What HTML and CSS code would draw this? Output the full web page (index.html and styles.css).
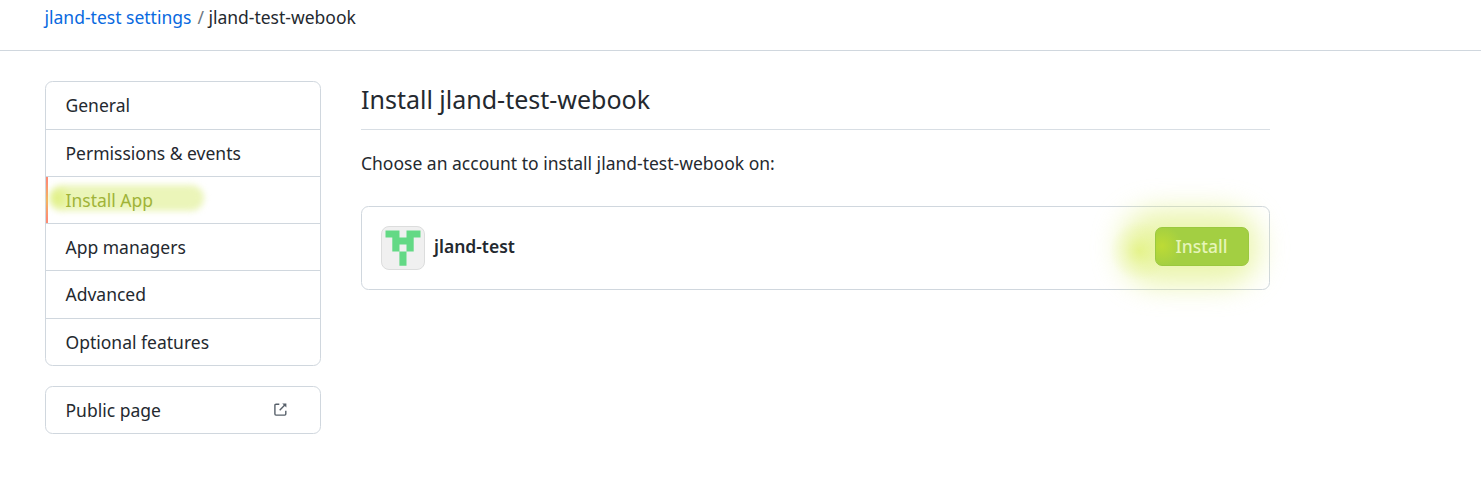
FILE: index.html
```html
<!DOCTYPE html>
<html lang="en">
<head>
<meta charset="utf-8">
<title>Install jland-test-webook</title>
<link rel="stylesheet" href="styles.css">
</head>
<body>
<header class="crumbs"><a class="crumb-link" href="#">jland-test settings</a><span class="slash">/</span><span class="current">jland-test-webook</span></header>
<div class="layout">
  <aside class="sidebar">
    <nav class="menu">
      <a class="item first general">General</a>
      <a class="item">Permissions &amp; events</a>
      <a class="item selected"><span class="marker"></span><span class="label">Install App</span></a>
      <a class="item">App managers</a>
      <a class="item tall">Advanced</a>
      <a class="item">Optional features</a>
    </nav>
    <nav class="menu">
      <a class="item first public">Public page
        <svg class="external" viewBox="0 0 13 13" fill="none" stroke="#57606a" stroke-width="1.4"><path d="M5.3 1.2H2Q.9 1.2.9 2.3V11Q.9 12.1 2 12.1H10.7Q11.8 12.1 11.8 11V7.8"/><path d="M5.7 7.2 10.8 2.1"/><path d="M8.2.4h4.2v4.2z" fill="#57606a" stroke="none"/></svg>
      </a>
    </nav>
  </aside>
  <main class="content">
    <h2 class="title">Install jland-test-webook</h2>
    <p class="intro">Choose an account to install jland-test-webook on:</p>
    <section class="account">
      <svg class="avatar" viewBox="0 0 44 44"><rect x=".5" y=".5" width="43" height="43" rx="7.5" fill="#f0f0f0" stroke="#dcdddd"/><path d="M4.5 4.5H18.5V11.5H25.5V4.5H39.5V11.5H32.7V25.5H25.5V39.8H18.4V25.5H11.3V11.5H4.5zM18.5 18.5V25.5H25.5V18.5z" fill="#63d985" fill-rule="evenodd"/></svg>
      <strong class="name">jland-test</strong>
      <div class="action"><span class="glow"></span><span class="spot"></span><button class="install">Install</button></div>
    </section>
  </main>
</div>
</body>
</html>
```
FILE: styles.css
```css
* { box-sizing: border-box; }
body {
  margin: 0;
  height: 477px;
  overflow: hidden;
  background: #fff;
  color: #24292f;
  font: 17.5px/26px "Noto Sans", sans-serif;
}
.crumbs {
  display: flex;
  height: 51px;
  padding: 4px 0 0 44.5px;
  border-bottom: 1px solid #d0d7de;
}
.crumb-link { color: #0969e0; text-decoration: none; }
.slash { margin: 0 4.3px 0 6.2px; color: #6e7781; }
.layout {
  display: grid;
  grid-template-columns: 276px 909px;
  gap: 40px;
  padding: 30px 0 0 45px;
}
.sidebar { display: flex; flex-direction: column; gap: 20px; }
.menu { border: 1px solid #d0d7de; border-radius: 7.5px; }
.item {
  position: relative;
  display: flex;
  align-items: center;
  height: 47px;
  padding: 0 20px 0 19.5px;
  border-top: 1px solid #d0d7de;
}
.item.first { border-top: 0; }
.item.general { padding-bottom: 1px; }
.item.tall { height: 48px; padding-bottom: 1px; }
.item.public { height: 46px; justify-content: space-between; padding-right: 33px; }
.menu .item:last-child:not(.public) { padding-bottom: 1px; }
.external { width: 13px; height: 13px; margin-top: -2px; }
.marker {
  position: absolute;
  left: 0;
  top: 0;
  width: 2px;
  height: 46px;
  background: linear-gradient(#fd8c73 10%, #f3b460 50%, #fd8c73 90%);
}
.label { position: relative; color: #a0b338; }
.selected::before {
  content: "";
  position: absolute;
  left: 3px;
  top: 8px;
  width: 155px;
  height: 26px;
  border-radius: 13px;
  background: radial-gradient(circle at 9px 13px, #dff07c 0, #ebf5b9 14px);
  filter: blur(3px);
}
.title {
  height: 49px;
  margin: 0;
  border-bottom: 1px solid #d8dee4;
  font-size: 25px;
  font-weight: 400;
  line-height: 36px;
}
.intro { margin: 20px 0 30px; }
.account {
  display: flex;
  align-items: center;
  height: 84px;
  padding: 0 20px 0 19px;
  border: 1px solid #d0d7de;
  border-radius: 7.5px;
}
.avatar { width: 44px; height: 44px; }
.name { margin: -4px 0 0 9px; font-weight: 600; }
.action { position: relative; margin: -3px 0 0 auto; }
.glow {
  position: absolute;
  inset: -17px -10px -19px -34px;
  border-radius: 35px;
  background: rgba(221, 237, 115, .58);
  filter: blur(14px);
}
.spot {
  position: absolute;
  left: -46px;
  top: -6px;
  width: 60px;
  height: 60px;
  background: radial-gradient(circle, rgba(216, 238, 75, .4), rgba(218, 239, 88, .16) 35%, rgba(220, 240, 100, 0) 70%);
}
.install {
  position: relative;
  display: block;
  width: 94px;
  height: 39px;
  padding: 0 1px 0 0;
  border: 1px solid #9bc83f;
  border-radius: 7px;
  background: radial-gradient(circle at 6px 18px, #bddb35 0, #a3cf42 20px);
  color: #e6f5b8;
  font: 500 17.5px/37px "Noto Sans", sans-serif;
}
```
